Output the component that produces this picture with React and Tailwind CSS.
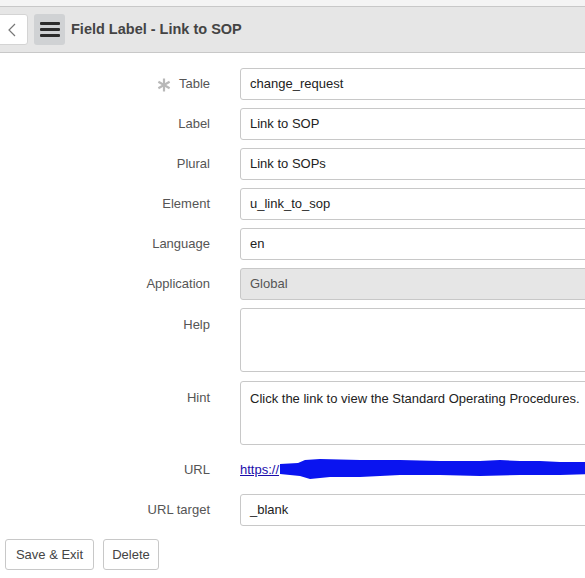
import React from "react";

const rows = [
  { label: "Table", value: "change_request", required: true },
  { label: "Label", value: "Link to SOP" },
  { label: "Plural", value: "Link to SOPs" },
  { label: "Element", value: "u_link_to_sop" },
  { label: "Language", value: "en" },
  { label: "Application", value: "Global", readOnly: true },
];

const Asterisk = () => (
  <svg width="14" height="14" viewBox="0 0 14 14" stroke="#b8b8b8" strokeWidth="2.2" strokeLinecap="butt">
    <path d="M7 0.5 V13.5" />
    <path d="M1.4 3.75 L12.6 10.25" />
    <path d="M1.4 10.25 L12.6 3.75" />
  </svg>
);

const Label = ({ children, required, top }) => (
  <div
    className={`flex w-[210px] shrink-0 justify-end gap-[8px] text-[13px] text-[#555] ${
      top ? "items-start pt-[7px]" : "items-center"
    }`}
  >
    {required && (
      <span className="mt-[2px]">
        <Asterisk />
      </span>
    )}
    <span>{children}</span>
  </div>
);

const Box = ({ children, readOnly, tall }) => (
  <div
    className={`flex w-[400px] shrink-0 whitespace-nowrap rounded-[3px] border border-[#c8c8c8] px-[9px] text-[13px] ${
      tall ? "items-start pt-[7px]" : "items-center"
    } ${readOnly ? "bg-[#e6e6e6] text-[#555]" : "bg-white text-[#222]"}`}
  >
    {children}
  </div>
);

export default function App() {
  return (
    <div
      className="h-[578px] w-[585px] overflow-hidden bg-white text-[#333]"
      style={{ fontFamily: "'Liberation Sans', Arial, sans-serif" }}
    >
      {/* header */}
      <div className="h-[6px] bg-[#f4f4f4]" />
      <div className="flex h-[47px] items-center gap-[6px] border-y border-[#c8c8c8] bg-[#e6e6e6]">
        <button className="-ml-[4px] flex h-[31px] w-[32px] items-center justify-center rounded-[3px] border border-[#d4d4d4] bg-white text-[#777]">
          <svg width="12" height="16" viewBox="0 0 12 16" fill="none" stroke="currentColor" strokeWidth="1.2">
            <path d="M9 2 L3 8 L9 14" />
          </svg>
        </button>
        <button className="flex h-[31px] w-[31px] items-center justify-center rounded-[3px] bg-[#d0d2d4]">
          <svg width="20" height="15" viewBox="0 0 20 15" fill="#2b2b2b">
            <rect x="0" y="0" width="20" height="3" rx="1" />
            <rect x="0" y="6" width="20" height="3" rx="1" />
            <rect x="0" y="12" width="20" height="3" rx="1" />
          </svg>
        </button>
        <h1 className="text-[14.5px] font-bold text-[#444]">Field Label - Link to SOP</h1>
      </div>

      {/* form */}
      <div className="flex flex-col gap-[8px] pt-[15px]">
        {rows.map((r) => (
          <div key={r.label} className="flex h-[32px] gap-[30px]">
            <Label required={r.required}>{r.label}</Label>
            <Box readOnly={r.readOnly}>{r.value}</Box>
          </div>
        ))}

        <div className="flex h-[64px] gap-[30px]">
          <Label top>Help</Label>
          <Box tall />
        </div>

        <div className="mt-[1px] flex h-[64px] gap-[30px]">
          <Label top>Hint</Label>
          <Box tall>Click the link to view the Standard Operating Procedures.</Box>
        </div>

        <div className="flex h-[33px] gap-[30px]">
          <Label>URL</Label>
          <div className="relative flex items-center text-[13px]">
            <span className="text-[#1a0dab] underline">https://</span>
            {/* redaction scribble */}
            <svg className="absolute left-[40px] top-[5px]" width="310" height="22" viewBox="0 0 310 22">
              <path
                d="M0 6 L18 5 L25 2 L40 1 L80 2 L120 2 L160 3 L200 3 L220 2 L240 3 L260 3 L280 4 L310 4 L310 16 L280 17 L240 17 L200 18 L160 17 L120 17 L80 19 L50 19 L30 21 L20 18 L0 16 Z"
                fill="#0a14f0"
              />
            </svg>
          </div>
        </div>

        <div className="flex h-[32px] gap-[30px]">
          <Label>URL target</Label>
          <Box>_blank</Box>
        </div>

        <div className="mt-[5px] flex gap-[9px] pl-[5px]">
          <button className="h-[31px] w-[89px] rounded-[3px] border border-[#c8c8c8] bg-white text-[13px] text-[#444]">
            Save &amp; Exit
          </button>
          <button className="h-[31px] w-[56px] rounded-[3px] border border-[#c8c8c8] bg-white text-[13px] text-[#444]">
            Delete
          </button>
        </div>
      </div>
    </div>
  );
}
